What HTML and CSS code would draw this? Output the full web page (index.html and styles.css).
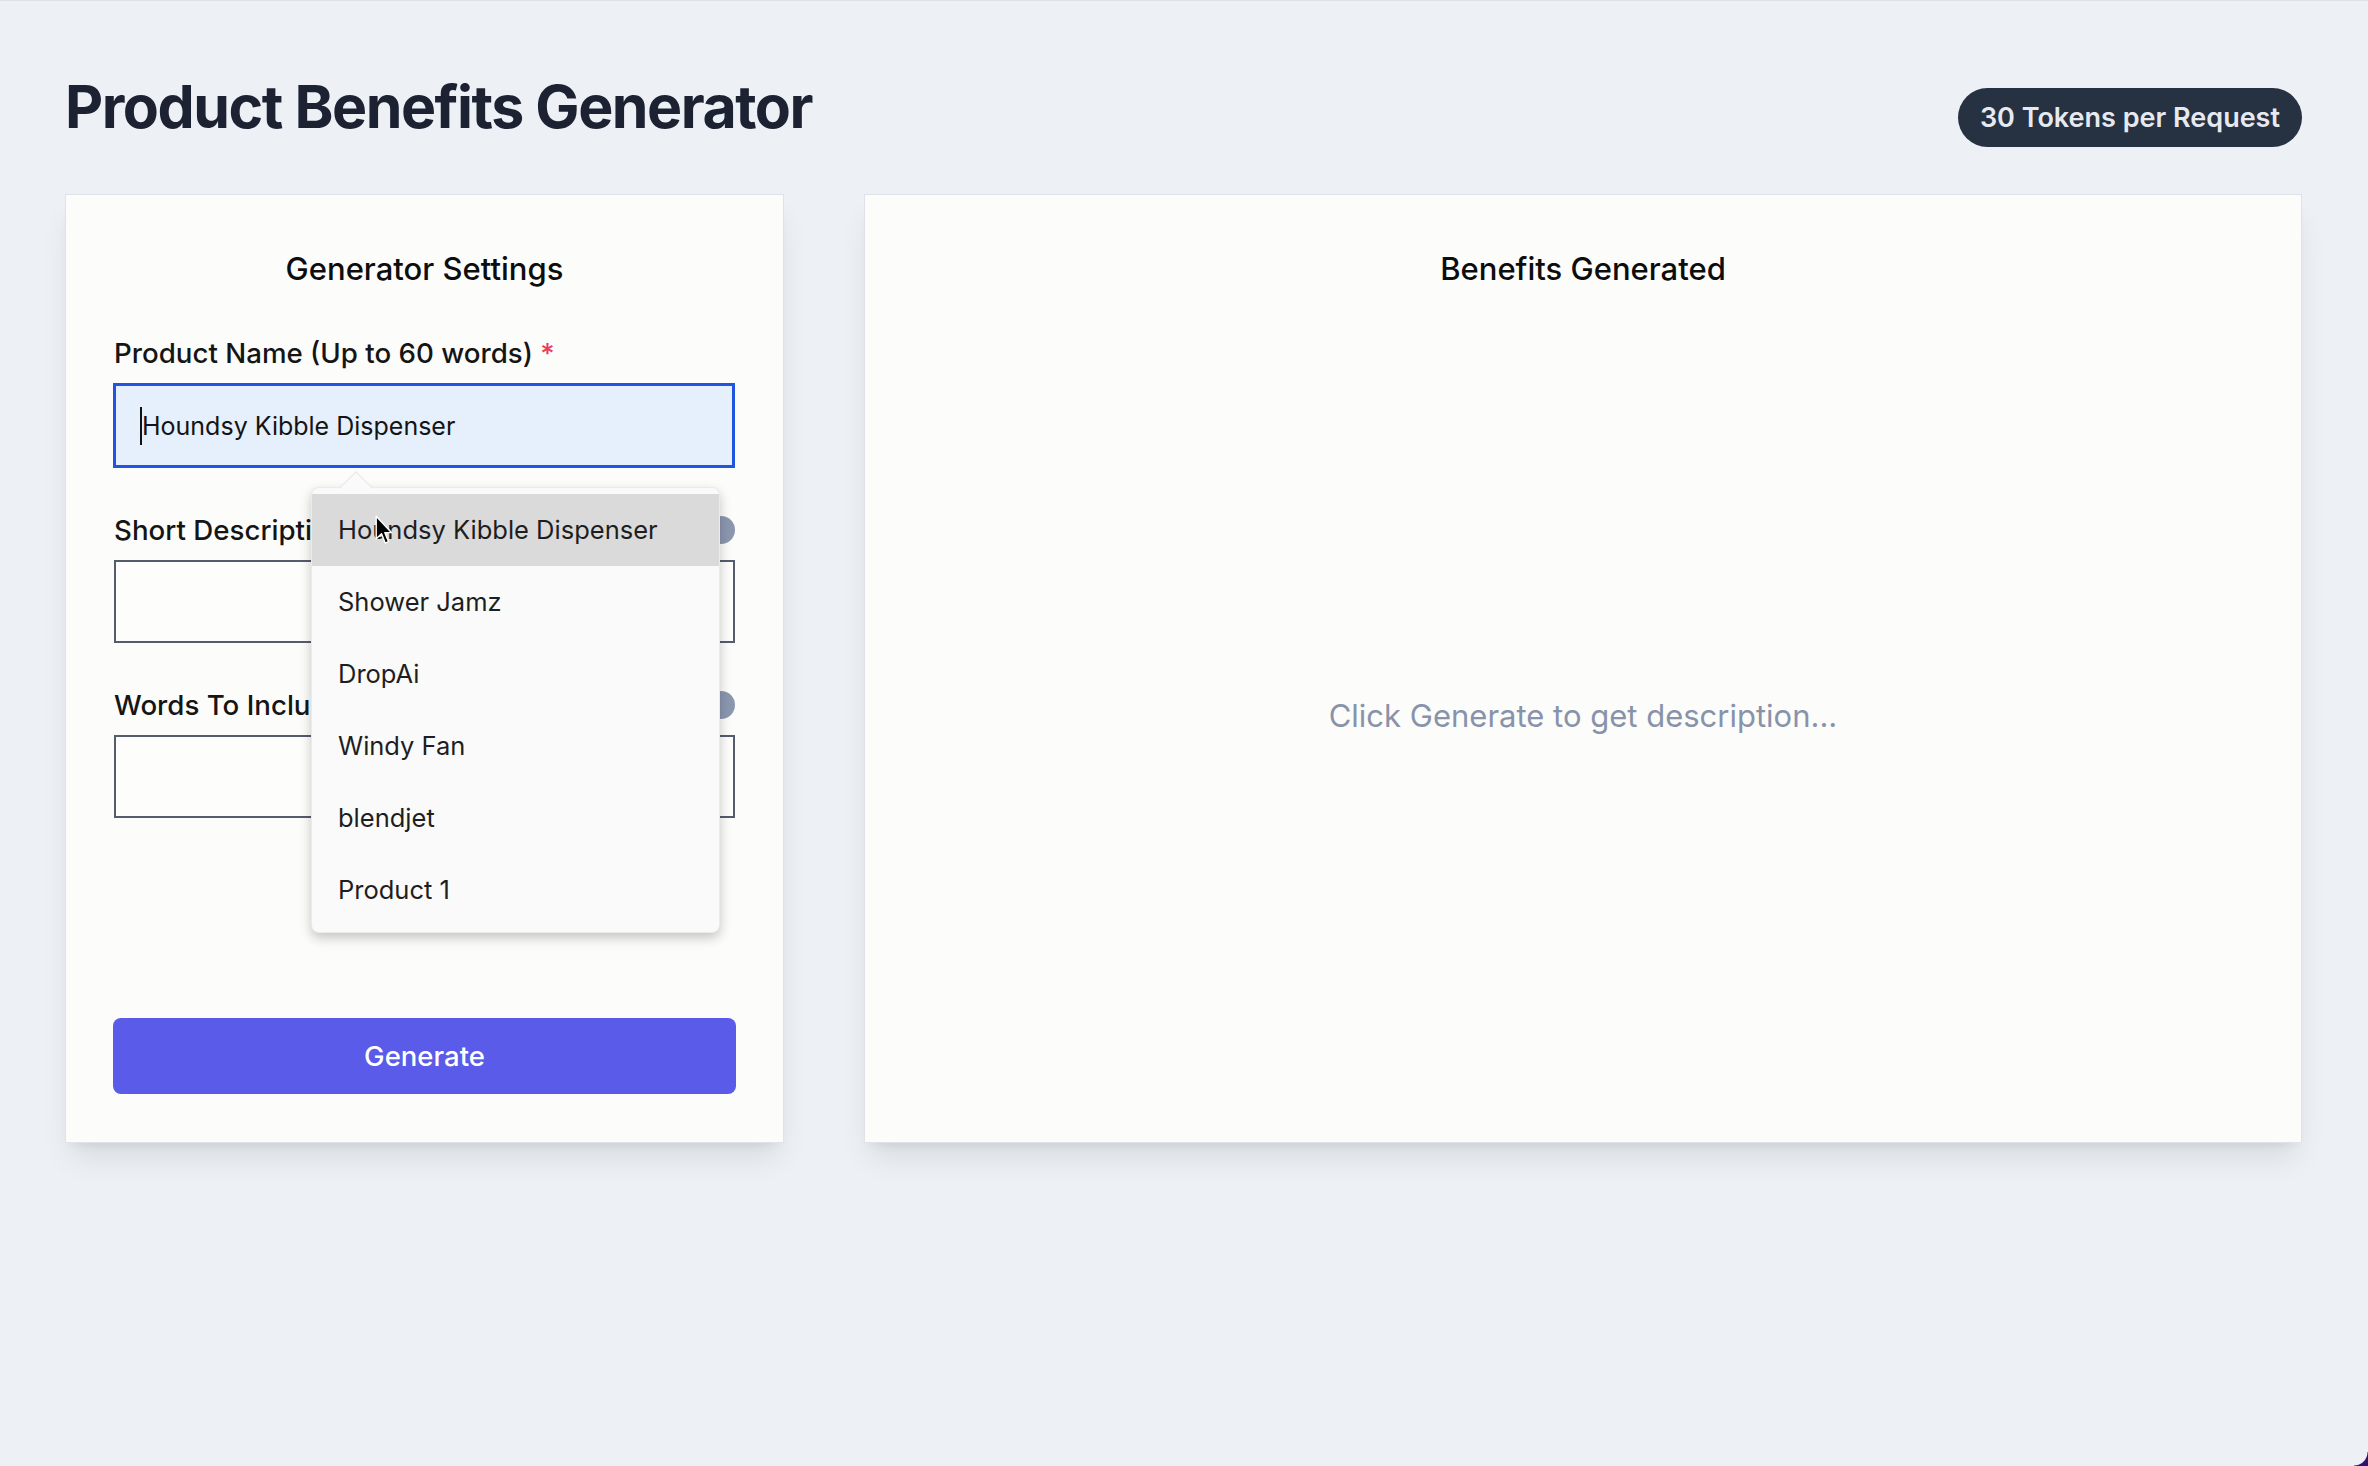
FILE: index.html
```html
<!DOCTYPE html>
<html lang="en">
<head>
<meta charset="utf-8">
<title>Product Benefits Generator</title>
<link rel="stylesheet" href="styles.css">
</head>
<body>
<div class="page">
  <header class="header">
    <h1 class="title">Product Benefits Generator</h1>
    <span class="badge">30 Tokens per Request</span>
  </header>
  <main class="columns">
    <section class="card settings">
      <h2 class="card-title">Generator Settings</h2>
      <div class="field">
        <div class="label-row"><label class="label">Product Name (Up to 60 words) <span class="req">*</span></label></div>
        <div class="input-wrap">
          <div class="input focused"><span class="caret"></span>Houndsy Kibble Dispenser</div>
          <div class="dropdown">
            <span class="dropdown-arrow"></span>
            <ul class="dropdown-list">
              <li class="dropdown-item active">Houndsy Kibble Dispenser</li>
              <li class="dropdown-item">Shower Jamz</li>
              <li class="dropdown-item">DropAi</li>
              <li class="dropdown-item">Windy Fan</li>
              <li class="dropdown-item">blendjet</li>
              <li class="dropdown-item">Product 1</li>
            </ul>
            <svg class="pointer" width="19" height="31" viewBox="0 0 16 26"><path d="M1 1 L1 20 L5.5 15.8 L8.6 23.6 L11.4 22.4 L8.3 14.8 L14 14.8 Z" fill="#000" stroke="#fff" stroke-width="1.2" stroke-linejoin="round"/></svg>
          </div>
        </div>
      </div>
      <div class="field">
        <div class="label-row"><label class="label">Short Description</label><span class="info"></span></div>
        <div class="textarea"></div>
      </div>
      <div class="field">
        <div class="label-row"><label class="label">Words To Include</label><span class="info"></span></div>
        <div class="textarea"></div>
      </div>
      <button class="generate">Generate</button>
    </section>
    <section class="card output">
      <h2 class="card-title">Benefits Generated</h2>
      <div class="placeholder">Click Generate to get description...</div>
    </section>
  </main>
  <span class="corner"></span>
</div>
</body>
</html>
```
FILE: styles.css
```css
* { box-sizing: border-box; }
html, body { margin: 0; padding: 0; }
body {
  background: #edf1f5;
  font-family: Inter, "Noto Sans", sans-serif;
  color: #111;
}
.page {
  min-height: 1466px;
  padding: 70px 66px 0 65px;
  border-top: 1px solid #dde2ea;
}
.header {
  display: flex;
  justify-content: space-between;
  align-items: flex-start;
  margin-bottom: 47px;
}
.title {
  margin: 0;
  font-size: 59px;
  line-height: 72px;
  font-weight: 700;
  letter-spacing: -0.025em;
  color: #1c2232;
}
.badge {
  margin-top: 17px;
  background: #263142;
  color: #e6eaf0;
  font-size: 27px;
  font-weight: 600;
  line-height: 41px;
  padding: 9px 22px;
  border-radius: 30px;
}
.columns {
  display: grid;
  grid-template-columns: minmax(0, 1fr) minmax(0, 2fr);
  gap: 80px;
}
.card {
  background: #fcfcfb;
  border: 1px solid #dfe3e9;
  box-shadow: 0 20px 30px -6px rgba(0,0,0,0.09), 0 8px 12px -8px rgba(0,0,0,0.1);
  padding: 52px 48px 48px;
  display: flex;
  flex-direction: column;
  min-width: 0;
}
.card-title {
  margin: 0;
  text-align: center;
  font-size: 31px;
  line-height: 44px;
  font-weight: 500;
  color: #0d0d0d;
}
.field { margin-top: 42px; }
.label-row {
  display: flex;
  justify-content: space-between;
  align-items: center;
  height: 40px;
}
.label {
  font-size: 27.7px;
  line-height: 40px;
  font-weight: 500;
  color: #151515;
  white-space: nowrap;
}
.req { color: #ef3b5b; }
.info {
  width: 28px;
  height: 28px;
  border-radius: 50%;
  background: #8b97b0;
}
.input-wrap { position: relative; margin-top: 10px; }
.input {
  height: 85px;
  border: 3px solid #1f55e0;
  background: #e6effc;
  font-size: 25px;
  color: #141414;
  display: flex;
  align-items: center;
  padding-left: 24px;
  margin-left: -1px;
}
.caret {
  display: inline-block;
  width: 2px;
  height: 38px;
  background: #111;
}
.textarea {
  margin-top: 10px;
  height: 83px;
  border: 2px solid #555c6c;
  background: #fdfdfc;
}
.generate {
  margin-top: 200px;
  height: 76px;
  width: calc(100% + 2px);
  margin-left: -1px;
  border: none;
  border-radius: 8px;
  background: #5a5be8;
  color: #fff;
  font-family: Inter, "Noto Sans", sans-serif;
  font-size: 27.5px;
  font-weight: 500;
}
.dropdown {
  position: absolute;
  left: 197px;
  top: 104px;
  width: 409px;
  background: #fafafa;
  border-radius: 8px;
  border: 1px solid rgba(0,0,0,0.06);
  box-shadow: 0 5px 12px rgba(0,0,0,0.22);
  padding: 6px 0;
  z-index: 5;
}
.dropdown-arrow {
  position: absolute;
  left: 32px;
  top: -12px;
  width: 24px;
  height: 24px;
  background: #fafafa;
  border-top: 1px solid rgba(0,0,0,0.08);
  border-left: 1px solid rgba(0,0,0,0.08);
  transform: rotate(45deg);
}
.dropdown-list {
  list-style: none;
  margin: 0;
  padding: 0;
  position: relative;
}
.dropdown-item {
  height: 72px;
  line-height: 72px;
  padding-left: 26px;
  font-size: 25.5px;
  color: #1e1e1e;
}
.dropdown-item.active { background: #dadada; }
.pointer {
  position: absolute;
  left: 63px;
  top: 27px;
  z-index: 6;
}
.output .placeholder {
  flex: 1;
  display: flex;
  align-items: center;
  justify-content: center;
  font-size: 31px;
  color: #8893aa;
  padding-top: 46px;
}
.corner {
  position: fixed;
  right: 0;
  bottom: 0;
  width: 14px;
  height: 14px;
  background: radial-gradient(circle at 0 0, transparent 13px, #2e1170 14px);
}
```
